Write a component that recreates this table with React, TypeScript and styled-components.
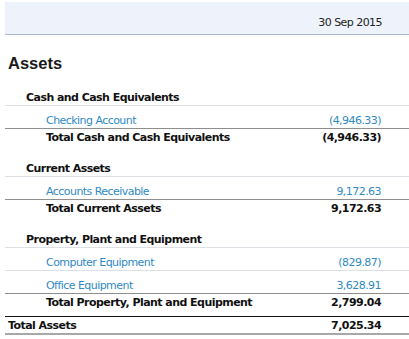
import React from 'react';
import styled, { createGlobalStyle } from 'styled-components';

interface Line {
  name: string;
  amount: string;
}

interface Section {
  title: string;
  lines: Line[];
  total: string;
}

const sections: Section[] = [
  {
    title: 'Cash and Cash Equivalents',
    lines: [{ name: 'Checking Account', amount: '(4,946.33)' }],
    total: '(4,946.33)',
  },
  {
    title: 'Current Assets',
    lines: [{ name: 'Accounts Receivable', amount: '9,172.63' }],
    total: '9,172.63',
  },
  {
    title: 'Property, Plant and Equipment',
    lines: [
      { name: 'Computer Equipment', amount: '(829.87)' },
      { name: 'Office Equipment', amount: '3,628.91' },
    ],
    total: '2,799.04',
  },
];

export default function App(): React.ReactElement {
  return (
    <>
      <GlobalStyle />
      <Report>
        <DateBand>
          <DateLabel>30 Sep 2015</DateLabel>
        </DateBand>

        <Heading>Assets</Heading>

        {sections.map((section) => (
          <Group key={section.title}>
            <GroupTitle>{section.title}</GroupTitle>
            {section.lines.map((line, i) => (
              <ItemRow key={line.name} $last={i === section.lines.length - 1}>
                <ItemName>{line.name}</ItemName>
                <ItemAmount>{line.amount}</ItemAmount>
              </ItemRow>
            ))}
            <TotalRow>
              <span>Total {section.title}</span>
              <span>{section.total}</span>
            </TotalRow>
          </Group>
        ))}

        <GrandTotal>
          <span>Total Assets</span>
          <span>7,025.34</span>
        </GrandTotal>
      </Report>
    </>
  );
}

const GlobalStyle = createGlobalStyle`
  body {
    margin: 0;
    background: #ffffff;
    font-family: "DejaVu Sans", Verdana, sans-serif;
    font-size: 11px;
    color: #111;
  }
`;

const Report = styled.div`
  padding: 2px 0 0 5px;
  font-size: 11px;
  line-height: 13px;
  letter-spacing: -0.55px;
`;

const DateBand = styled.div`
  height: 33px;
  box-sizing: border-box;
  padding: 14px 27px 0 0;
  background: #eef3fb;
  border-bottom: 1px solid #a9b8c9;
  display: flex;
  justify-content: flex-end;
`;

const DateLabel = styled.span`
  color: #222;
`;

const Heading = styled.h1`
  margin: 18px 0 0 3px;
  font-family: "Liberation Sans", Arial, sans-serif;
  font-size: 16.5px;
  line-height: 20px;
  letter-spacing: 0;
  font-weight: bold;
  color: #1a1a1a;
`;

const Group = styled.div`
  margin-top: 18px;

  & + & {
    margin-top: 11px;
  }
`;

const Row = styled.div`
  display: flex;
  justify-content: space-between;
  padding-right: 28px;
`;

const GroupTitle = styled.div`
  padding: 0 0 1px 21px;
  border-bottom: 1px solid #dde1e6;
  font-weight: bold;
  color: #111;
`;

const ItemRow = styled(Row)<{ $last: boolean }>`
  padding-top: 8px;
  padding-bottom: 1px;
  padding-left: 41px;
  border-bottom: 1px solid ${({ $last }) => ($last ? '#8e8e8e' : '#dde1e6')};
`;

const ItemName = styled.span`
  color: #2f8ac4;
`;

const ItemAmount = styled.span`
  color: #2f8ac4;
`;

const TotalRow = styled(Row)`
  padding-top: 2px;
  padding-bottom: 7px;
  padding-left: 41px;
  font-weight: bold;
  color: #111;
`;

const GrandTotal = styled(Row)`
  padding: 2px 28px 1px 3px;
  border-top: 1px solid #111;
  border-bottom: 2px solid #a8a8a8;
  font-weight: bold;
  color: #111;
`;
